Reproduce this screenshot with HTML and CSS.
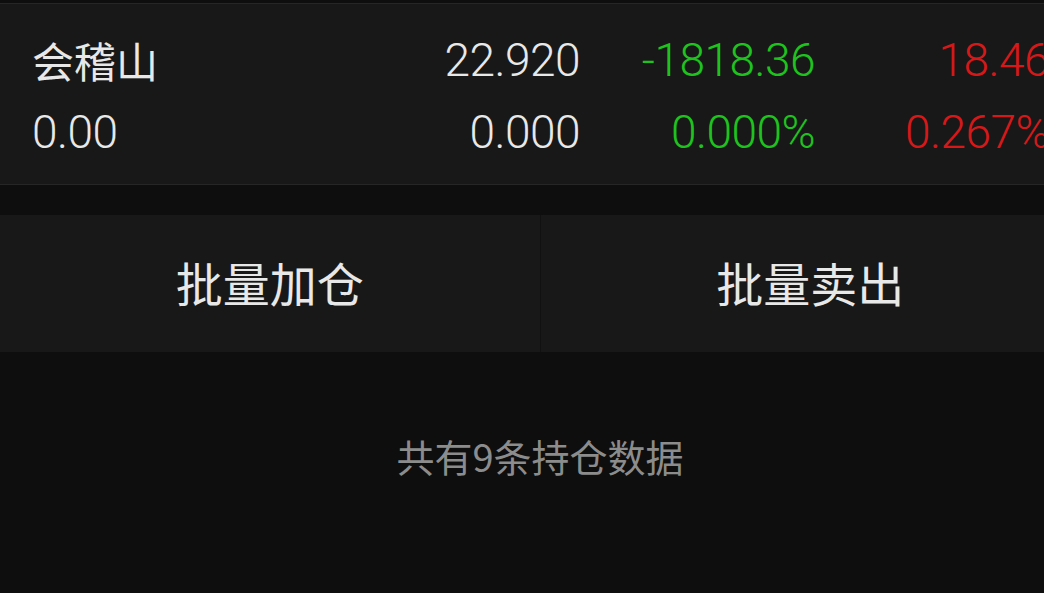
FILE: index.html
```html
<!DOCTYPE html>
<html lang="zh-CN">
<head>
    <meta charset="UTF-8">
    <meta name="viewport" content="width=device-width, initial-scale=1.0">
    <title>持仓</title>
    <link rel="stylesheet" href="styles.css">
</head>
<body>
    <div class="page">
        <div class="holding">
            <div class="holding-row">
                <span class="cell name">会稽山</span>
                <span class="cell num">22.920</span>
                <span class="cell num down">-1818.36</span>
                <span class="cell num up">18.46</span>
            </div>
            <div class="holding-row">
                <span class="cell num-left">0.00</span>
                <span class="cell num">0.000</span>
                <span class="cell num down">0.000%</span>
                <span class="cell num up">0.267%</span>
            </div>
        </div>

        <div class="batch-actions">
            <button class="batch-btn">批量加仓</button>
            <button class="batch-btn">批量卖出</button>
        </div>

        <p class="summary">共有9条持仓数据</p>
    </div>
</body>
</html>
```

FILE: styles.css
```css
:root {
    --color-bg: #0e0e0e;
    --color-panel: #181818;
    --color-line: #262626;
    --color-text: #e8e8e8;
    --color-muted: #8c8c8c;
    --color-down: #1ec31e;
    --color-up: #d81818;
}

* {
    margin: 0;
    padding: 0;
    box-sizing: border-box;
}

body {
    background: var(--color-bg);
    color: var(--color-text);
    font-family: Roboto, "Noto Sans CJK SC", sans-serif;
    overflow: hidden;
}

.page {
    width: 1080px;
    padding-top: 3px;
}

.holding {
    background: var(--color-panel);
    border-top: 1px solid var(--color-line);
    border-bottom: 1px solid var(--color-line);
    padding: 20px 0 16px 32px;
}

.holding-row {
    display: grid;
    grid-template-columns: 300px 248px 235px 234px;
    height: 72px;
    line-height: 72px;
    font-size: 46px;
    font-weight: 300;
    letter-spacing: -0.5px;
    white-space: nowrap;
}

.cell.name {
    font-family: "Noto Sans CJK SC", sans-serif;
    font-size: 42px;
    font-weight: 400;
    letter-spacing: 0;
}

.cell.num {
    text-align: right;
}

.down {
    color: var(--color-down);
}

.up {
    color: var(--color-up);
}

.batch-actions {
    display: flex;
    margin-top: 30px;
    background: var(--color-panel);
    height: 137px;
}

.batch-btn {
    flex: 1;
    border: none;
    background: transparent;
    color: var(--color-text);
    font-family: "Noto Sans CJK SC", sans-serif;
    font-size: 47px;
    padding-bottom: 4px;
    cursor: pointer;
}

.batch-btn + .batch-btn {
    border-left: 1px solid #111111;
}

.summary {
    margin-top: 76px;
    text-align: center;
    font-family: "Noto Sans CJK SC", sans-serif;
    font-size: 38px;
    color: var(--color-muted);
}
```
